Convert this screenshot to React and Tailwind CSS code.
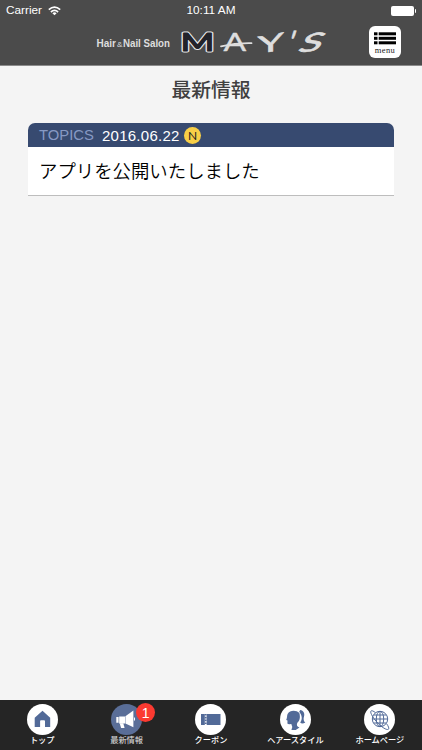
import React from 'react';

const BLUE = '#526a98';

function Wifi() {
  return (
    <svg className="w-[13px] h-[10px] ml-[6px]" viewBox="0 0 13 10" fill="none" stroke="white" strokeWidth="1.7">
      <path d="M.8 3.7Q6.5-1.3 12.2 3.7" />
      <path d="M2.9 6Q6.5 2.9 10.1 6" />
      <path d="M6.5 9.2L4.4 7.2Q6.5 5.5 8.6 7.2Z" fill="white" stroke="none" />
    </svg>
  );
}

function Logo() {
  return (
    <svg className="h-[38px] w-[236px] overflow-visible" viewBox="94 25 236 38" role="img" aria-label="Hair&Nail Salon MAY'S">
      <g fontFamily="'Liberation Sans', Arial, sans-serif" fill="#dedede">
        <text x="96.5" y="48.8" fontSize="10" fontWeight="700" textLength="19.5" lengthAdjust="spacingAndGlyphs">Hair</text>
        <text x="117" y="48.8" fontSize="7.5" textLength="5.5" lengthAdjust="spacingAndGlyphs">&amp;</text>
        <text x="123" y="48.8" fontSize="10" fontWeight="700" textLength="47" lengthAdjust="spacingAndGlyphs">Nail Salon</text>
      </g>
      <g fontFamily="Lato, sans-serif" fill="#dedede" strokeLinejoin="round" strokeLinecap="round">
        <text transform="translate(180.5 52.6) scale(1.52 1.04)" fontSize="24" stroke="#e8e8e8" strokeWidth="3">M</text>
        <text transform="translate(180.5 52.6) scale(1.52 1.04)" fontSize="24" fill="#22232a" stroke="#22232a" strokeWidth="1.2">M</text>
        <text transform="translate(223.5 53) scale(1.4 1.04)" fontSize="24" stroke="#dedede" strokeWidth=".4">A</text>
        <path d="M221 48.3Q236 44.8 251.5 45.2" fill="none" stroke="#dedede" strokeWidth="1.8" />
        <text transform="matrix(1.75 -.3 0 1 257.5 56)" fontSize="24" stroke="#dedede" strokeWidth=".5">Y</text>
        <text transform="matrix(1.3 0 -.4 1.3 285 54.5)" fontSize="24" stroke="#dedede" strokeWidth=".4">'</text>
        <text transform="matrix(1.75 -.15 -.55 1.08 296.5 54.5)" fontSize="24" stroke="#dedede" strokeWidth=".6">S</text>
      </g>
    </svg>
  );
}

function MenuButton() {
  return (
    <button className="ml-[39px] flex h-8 w-8 flex-col items-center rounded-[6px] bg-white pt-[6px]">
      <svg className="h-[13px] w-[22px] shrink-0" viewBox="0 0 22 13" fill="black">
        {[0.3, 4.8, 9.3].map((y) => (
          <g key={y}>
            <rect x="0" y={y} width="3.5" height="3" />
            <rect x="4.7" y={y} width="17.3" height="3" />
          </g>
        ))}
      </svg>
      <span className="text-[8.5px] leading-[10px] tracking-[.4px] text-[#222] font-['Liberation_Serif',serif]">menu</span>
    </button>
  );
}

function Home() {
  return <path fill={BLUE} d="M15.5 6.7L23.2 13.7V23H18V17.2Q18 16.3 17.1 16.3H14Q13.1 16.3 13.1 17.2V23H7.7V13.7Z" />;
}

function Megaphone() {
  return (
    <g fill="white">
      <path d="M5.3 13H7.6V18.8H5.3Z" />
      <path d="M8.2 12.5H14V19.4H8.2Z" />
      <path d="M14.4 12.3L22.4 6.5V23.3L14.4 19.4Z" />
      <path d="M23 13Q25.3 14.7 23 17.3Z" />
      <path d="M8.7 19.3H12.3L13.6 24H10.1Z" />
    </g>
  );
}

function Coupon() {
  return (
    <g>
      <path fill={BLUE} d="M6 10H9.8V21H6ZM11.7 10H25.5V21H11.7Z" />
      <path fill="none" stroke={BLUE} strokeWidth="1.9" strokeDasharray="1.6 1.2" d="M10.7 10V21" />
    </g>
  );
}

function Hair() {
  return (
    <g fill={BLUE}>
      <path d="M19.3 9.1C16.2 5.8 9.8 6 7.6 10C6.8 11.7 7.4 13.6 6.2 15.9L7.5 16.4L7.4 19.5Q7.9 20.5 11.3 20L12.3 23L11.4 26Q16 26.7 19.5 23.4C16.9 23 16.4 21 17.3 18.7C19.7 17.1 20.6 13.5 19.3 9.1Z" />
      <path d="M19.2 7.7L20.2 6C23.5 6.2 25 9.7 24 12.6C23.2 15.2 23.6 17.4 25.3 18.6Q21.8 20.4 20.2 18.4C22.6 15.3 22.2 11.4 19.2 7.7Z" />
    </g>
  );
}

function Globe() {
  return (
    <g fill="none" stroke={BLUE} strokeWidth="1">
      <circle cx="16" cy="15" r="7.7" />
      <ellipse cx="16" cy="15" rx="3.7" ry="7.7" />
      <path d="M16 7.3V22.7M8.3 15H23.7M9.8 11H22.2M9.8 19H22.2" />
      <path d="M11.5 8.7C7.6 5.5 5.5 6.2 7.5 10.5C10.2 16 16.8 23 21.8 25.1C25.8 26.7 25.5 23.6 22.6 19.8" />
    </g>
  );
}

const TABS = [
  { label: 'トップ', icon: Home },
  { label: '最新情報', icon: Megaphone, active: true, badge: 1 },
  { label: 'クーポン', icon: Coupon },
  { label: 'ヘアースタイル', icon: Hair },
  { label: 'ホームページ', icon: Globe },
];

function Tab({ label, icon: Icon, active, badge }) {
  return (
    <button className="flex flex-col items-center pt-[4px]">
      <span className="relative">
        <svg className={`h-[31px] w-[31px] rounded-full ${active ? 'bg-[#5a6e98]' : 'bg-white'}`} viewBox="0 0 31 31">
          <Icon />
        </svg>
        {badge && (
          <span className="absolute -top-px left-[25px] flex h-[19px] w-[19px] items-center justify-center rounded-full bg-[#fb3a31] text-[14px] leading-none text-white">
            {badge}
          </span>
        )}
      </span>
      <span className={`whitespace-nowrap text-[8.2px] leading-[12px] ${active ? 'font-normal text-[#e0e0e0]' : 'font-medium text-white'}`}>{label}</span>
    </button>
  );
}

export default function App() {
  return (
    <div className="flex h-[750px] w-[422px] flex-col overflow-hidden bg-[#f4f4f4] font-['Liberation_Sans','Noto_Sans_CJK_JP',sans-serif]">
      <header className="h-[66px] shrink-0 border-b border-[#8b8b8b] bg-[#4b4b4b]">
        <div className="grid h-[22px] grid-cols-3 items-center px-[6px] text-[11.8px] text-white">
          <div className="flex items-center">Carrier<Wifi /></div>
          <div className="text-center font-medium">10:11 AM</div>
          <div className="flex items-center justify-end">
            <span className="h-[10px] w-[23px] rounded-[2px] bg-white" />
            <span className="ml-px h-1 w-[1.5px] rounded-r bg-white" />
          </div>
        </div>
        <div className="flex h-10 items-center pl-[94px]">
          <Logo />
          <MenuButton />
        </div>
      </header>
      <main className="flex-1 px-7">
        <h1 className="pt-[8px] text-center text-[19.8px] leading-[30px] font-medium text-[#404040] font-['Noto_Sans_CJK_JP',sans-serif]">最新情報</h1>
        <article className="mt-[19px] w-[366px] overflow-hidden rounded-t-[7px] border-b border-[#bdbdbd] bg-white">
          <div className="flex h-6 items-center bg-[#374a70] pl-[11px] text-[15px] leading-none">
            <span className="w-[63px] text-[#8799c4] text-[14.8px]">TOPICS</span>
            <time className="w-[78px] tracking-[.25px] text-white">2016.06.22</time>
            <span className="ml-[4px] flex h-[17px] w-[17px] items-center justify-center rounded-full bg-[#f8cf47] pt-px text-[12px] font-normal text-[#222] font-['Lato',sans-serif]">N</span>
          </div>
          <p className="h-12 pl-[11px] text-[18.4px] leading-[46px] font-[350] text-black font-['Noto_Sans_CJK_JP',sans-serif]">アプリを公開いたしました</p>
        </article>
      </main>
      <nav className="grid h-[50px] shrink-0 grid-cols-5 bg-[#252525] font-['Liberation_Sans','Noto_Sans_CJK_JP',sans-serif]">
        {TABS.map((tab) => <Tab key={tab.label} {...tab} />)}
      </nav>
    </div>
  );
}
